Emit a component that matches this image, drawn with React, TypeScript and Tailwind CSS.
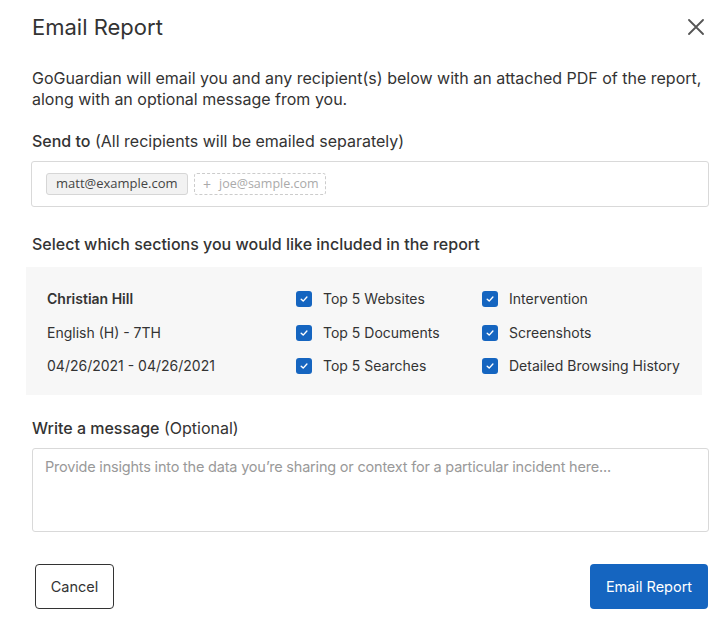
import React, { useState } from 'react';

const sections = [
  ['Top 5 Websites', 'Intervention'],
  ['Top 5 Documents', 'Screenshots'],
  ['Top 5 Searches', 'Detailed Browsing History'],
];

const info = ['Christian Hill', 'English (H) - 7TH', '04/26/2021 - 04/26/2021'];

const Check: React.FC<{ checked: boolean; onClick: () => void }> = ({ checked, onClick }) => (
  <button
    onClick={onClick}
    className={`w-4 h-4 rounded-[3px] flex items-center justify-center shrink-0 ${
      checked ? 'bg-[#1565c0]' : 'bg-white border border-[#999]'
    }`}
  >
    {checked && (
      <svg width="10" height="10" viewBox="0 0 10 10" fill="none">
        <path d="M2.2 5.2 L4.2 7.1 L7.9 3" stroke="white" strokeWidth="1.4" strokeLinecap="round" strokeLinejoin="round" />
      </svg>
    )}
  </button>
);

export default function App() {
  const [checked, setChecked] = useState<Record<string, boolean>>(
    Object.fromEntries(sections.flat().map((s) => [s, true]))
  );

  return (
    <div className="w-[724px] h-[620px] bg-white text-[#333] font-['Inter',sans-serif] relative">
      {/* Header */}
      <div className="flex items-center justify-between pl-8 pr-[16px] pt-[12px]">
        <h1 className="text-[22px] leading-[30px] text-[#333]">Email Report</h1>
        <button className="w-6 h-6 flex items-center justify-center text-[#555]">
          <svg width="16" height="16" viewBox="0 0 16 16" fill="none">
            <path d="M1 1 L15 15 M15 1 L1 15" stroke="currentColor" strokeWidth="1.8" strokeLinecap="round" />
          </svg>
        </button>
      </div>

      <p className="px-8 mt-[26px] text-[16px] leading-[21px] text-[#333] whitespace-nowrap">
        GoGuardian will email you and any recipient(s) below with an attached PDF of the report,
        <br />
        along with an optional message from you.
      </p>

      {/* Send to */}
      <div className="px-8 mt-[21px] text-[16px] leading-[20px]">
        <span className="font-medium">Send to</span> (All recipients will be emailed separately)
      </div>
      <div className="ml-[31px] w-[678px] mt-[10px] h-[46px] border border-[#d9d9d9] rounded-[3px] flex items-center gap-[6px] px-[14px] font-['Open_Sans',sans-serif] text-[13px]">
        <span className="h-[22px] px-[9px] flex items-center bg-[#f2f2f2] border border-[#d6d6d6] rounded-[3px] text-[#444] w-[142px]">
          matt@example.com
        </span>
        <span className="h-[22px] w-[132px] px-[8px] flex items-center gap-[8px] border border-dashed border-[#ccc] rounded-[3px] text-[#aaa] text-[12.5px] whitespace-nowrap">
          <span className="text-[14px]">+</span>joe@sample.com
        </span>
      </div>

      {/* Sections */}
      <div className="px-8 mt-[27px] text-[16px] leading-[20px] font-medium">
        Select which sections you would like included in the report
      </div>
      <div className="ml-[26px] w-[676px] mt-[13px] h-[128px] bg-[#f7f7f7] px-[21px] pt-[22px] flex flex-col gap-[13.5px] text-[14px] leading-[20px] whitespace-nowrap">
        {sections.map((row, i) => (
          <div key={i} className="flex items-center h-[20px]">
            <div className={`w-[249px] shrink-0 ${i === 0 ? 'font-semibold' : ''}`}>{info[i]}</div>
            {row.map((s, j) => (
              <div key={s} className={`flex items-center gap-[11px] shrink-0 ${j === 0 ? 'w-[186px]' : ''}`}>
                <Check checked={checked[s]} onClick={() => setChecked((p) => ({ ...p, [s]: !p[s] }))} />
                <span>{s}</span>
              </div>
            ))}
          </div>
        ))}
      </div>

      {/* Message */}
      <div className="px-8 mt-[23px] text-[16px] leading-[20px]">
        <span className="font-medium">Write a message</span> (Optional)
      </div>
      <textarea
        className="block ml-8 mt-[10px] w-[677px] h-[84px] border border-[#d9d9d9] rounded-[3px] px-[12px] py-[8px] text-[14.5px] leading-[20px] tracking-[-0.2px] resize-none outline-none placeholder:text-[#999]"
        placeholder="Provide insights into the data you’re sharing or context for a particular incident here..."
      />

      {/* Footer */}
      <div className="flex items-center justify-between pl-[35px] pr-[16px] mt-[32px]">
        <button className="h-[45px] w-[79px] border border-[#333] rounded-[4px] text-[14.5px] text-[#333]">
          Cancel
        </button>
        <button className="h-[45px] w-[118px] bg-[#1565c0] rounded-[4px] text-[14.5px] text-white">
          Email Report
        </button>
      </div>
    </div>
  );
}
